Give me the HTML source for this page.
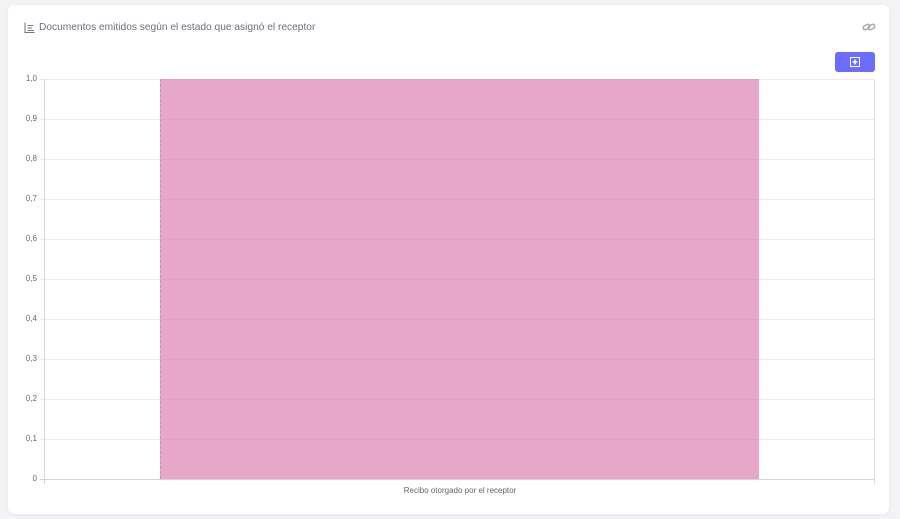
<!DOCTYPE html>
<html><head><meta charset="utf-8"><style>
body{margin:0;width:900px;height:519px;background:#f3f3f6;font-family:"Liberation Sans",sans-serif;position:relative;overflow:hidden}
.card{position:absolute;left:8px;top:5px;width:881px;height:509px;background:#fff;border-radius:6px;box-shadow:0 1px 3px rgba(0,0,0,.06)}
.t{position:absolute;left:39px;top:22px;font-size:10.2px;color:#6b6e80}
.g{position:absolute;left:40px;width:834px;height:1px;background:#ebebeb}
.l{position:absolute;width:34px;text-align:right;left:3px;font-size:8px;color:#666}
</style></head><body>
<div class="card"></div>
<svg style="position:absolute;left:24px;top:22px" width="11" height="11" viewBox="0 0 11 11" fill="none" stroke="#777" stroke-width="1"><path d="M1 0.5V10.5H10.5M3.5 3.5H9M3.5 6H8M3.5 8.5H10"/></svg>
<div class="t">Documentos emitidos según el estado que asignó el receptor</div>
<svg style="position:absolute;left:862px;top:21px" width="14" height="12" viewBox="0 0 14 12" fill="none" stroke="#aaa" stroke-width="1.5"><rect x="1" y="4" width="7" height="4" rx="2" transform="rotate(-30 4.5 6)"/><rect x="6" y="4" width="7" height="4" rx="2" transform="rotate(-30 9.5 6)"/></svg>
<div style="position:absolute;left:835px;top:52px;width:40px;height:20px;background:#6c6cff;border-radius:3px"></div>
<svg style="position:absolute;left:850px;top:57px" width="10" height="10" viewBox="0 0 10 10"><rect x="0.5" y="0.5" width="9" height="9" fill="none" stroke="#fff"/><path d="M5 2.5V7.5M2.5 5H7.5" stroke="#fff" stroke-width="1.5"/></svg>
<div class="g" style="top:79px"></div><div class="g" style="top:119px"></div><div class="g" style="top:159px"></div><div class="g" style="top:199px"></div><div class="g" style="top:239px"></div><div class="g" style="top:279px"></div><div class="g" style="top:319px"></div><div class="g" style="top:359px"></div><div class="g" style="top:399px"></div><div class="g" style="top:439px"></div>
<div style="position:absolute;left:40px;top:479px;width:834px;height:1px;background:#d5d5d5"></div>
<div style="position:absolute;left:44px;top:79px;width:1px;height:405px;background:#d5d5d5"></div>
<div style="position:absolute;left:874px;top:79px;width:1px;height:405px;background:#e0e0e0"></div>
<div style="position:absolute;left:160px;top:79px;width:598px;height:400px;background:rgba(220,130,178,.7);border-left:1px dashed #c890b0"></div>
<div class="l" style="top:74px">1,0</div><div class="l" style="top:114px">0,9</div><div class="l" style="top:154px">0,8</div><div class="l" style="top:194px">0,7</div><div class="l" style="top:234px">0,6</div><div class="l" style="top:274px">0,5</div><div class="l" style="top:314px">0,4</div><div class="l" style="top:354px">0,3</div><div class="l" style="top:394px">0,2</div><div class="l" style="top:434px">0,1</div><div class="l" style="top:474px">0</div>
<div style="position:absolute;left:360px;width:200px;text-align:center;top:486px;font-size:8px;color:#666">Recibo otorgado por el receptor</div>
</body></html>
